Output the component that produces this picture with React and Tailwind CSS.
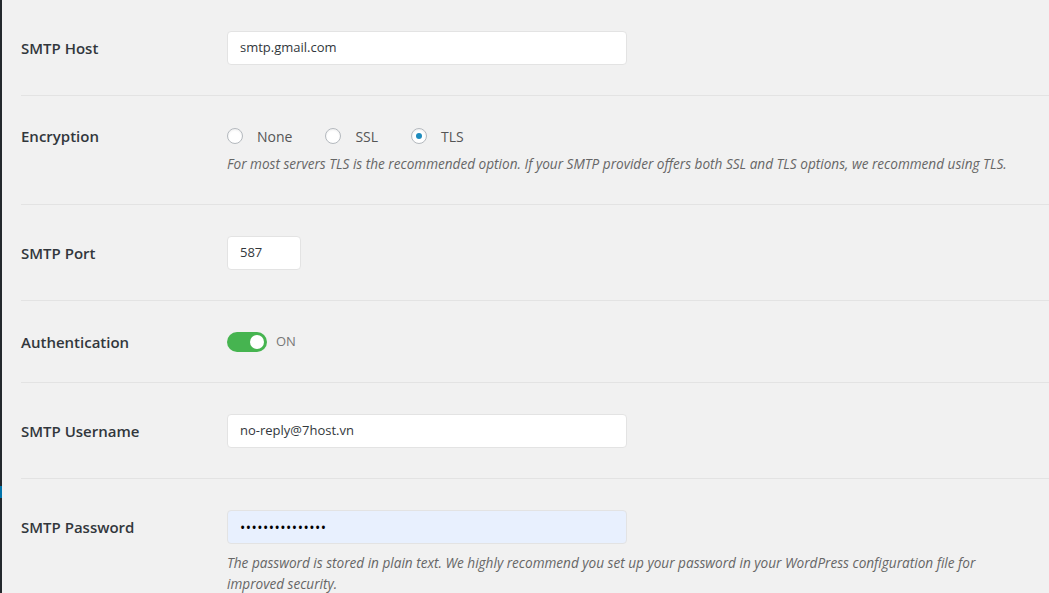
import React from 'react';

const font = { fontFamily: '"Open Sans", "Noto Sans", sans-serif' };

function Row({ label, children, last, labelH = 'h-[34px]' }) {
  return (
    <div className={`flex items-start pt-[31px] pb-[30px] ${last ? '' : 'border-b border-[#e3e3e3]'}`}>
      <div className={`w-[206px] shrink-0 ${labelH} flex items-center text-[15px] font-semibold text-[#32373c]`}>
        {label}
      </div>
      <div className="flex-1 min-w-0">{children}</div>
    </div>
  );
}

function TextInput({ value, width = 'w-[400px]', bg = 'bg-white' }) {
  return (
    <div className={`${width} h-[34px] ${bg} border border-[#e3e3e3] rounded-[4px] px-3 flex items-center text-[13px] text-[#32373c]`}>
      {value}
    </div>
  );
}

function Radio({ label, checked }) {
  return (
    <div className="flex items-center mr-[33px]">
      <span className="w-4 h-4 rounded-full border border-[#b4b9be] bg-white flex items-center justify-center shadow-[inset_0_1px_2px_rgba(0,0,0,0.07)]">
        {checked && <span className="w-[6px] h-[6px] rounded-full bg-[#1e8cbe]" />}
      </span>
      <span className="ml-[14px] text-[14px] text-[#555]">{label}</span>
    </div>
  );
}

export default function App() {
  return (
    <div className="w-[1049px] h-[593px] overflow-hidden bg-[#f1f1f1] flex" style={font}>
      {/* admin menu edge */}
      <div className="w-[2px] shrink-0 bg-[#23282d] flex flex-col">
        <div className="h-[486px]" />
        <div className="h-[12px] bg-[#0073aa]" />
      </div>

      <div className="flex-1 ml-[19px]">
        <Row label="SMTP Host">
          <TextInput value="smtp.gmail.com" />
        </Row>

        <Row label="Encryption" labelH="h-[18px]">
          <div className="h-[18px] flex items-center">
            <Radio label="None" />
            <Radio label="SSL" />
            <Radio label="TLS" checked />
          </div>
          <p className="mt-[8px] text-[13.6px] italic text-[#666] leading-[21px] whitespace-nowrap">
            For most servers TLS is the recommended option. If your SMTP provider offers both SSL and TLS options, we recommend using TLS.
          </p>
        </Row>

        <Row label="SMTP Port">
          <TextInput value="587" width="w-[74px]" />
        </Row>

        <Row label="Authentication" labelH="h-[20px]">
          <div className="h-[20px] flex items-center">
            <div className="w-10 h-5 rounded-full bg-[#46b450] flex items-center justify-end pr-[3px]">
              <span className="w-[14px] h-[14px] rounded-full bg-white" />
            </div>
            <span className="ml-[9px] text-[13px] text-[#777]">ON</span>
          </div>
        </Row>

        <Row label="SMTP Username">
          <TextInput value="no-reply@7host.vn" />
        </Row>

        <Row label="SMTP Password" last>
          <TextInput value={<span className="text-black text-[14px] tracking-[0.5px]">•••••••••••••••</span>} bg="bg-[#e8f0fe]" />
          <p className="mt-[8px] w-[770px] text-[13.6px] italic text-[#666] leading-[21px]">
            The password is stored in plain text. We highly recommend you set up your password in your WordPress configuration file for improved security.
          </p>
        </Row>
      </div>
    </div>
  );
}
